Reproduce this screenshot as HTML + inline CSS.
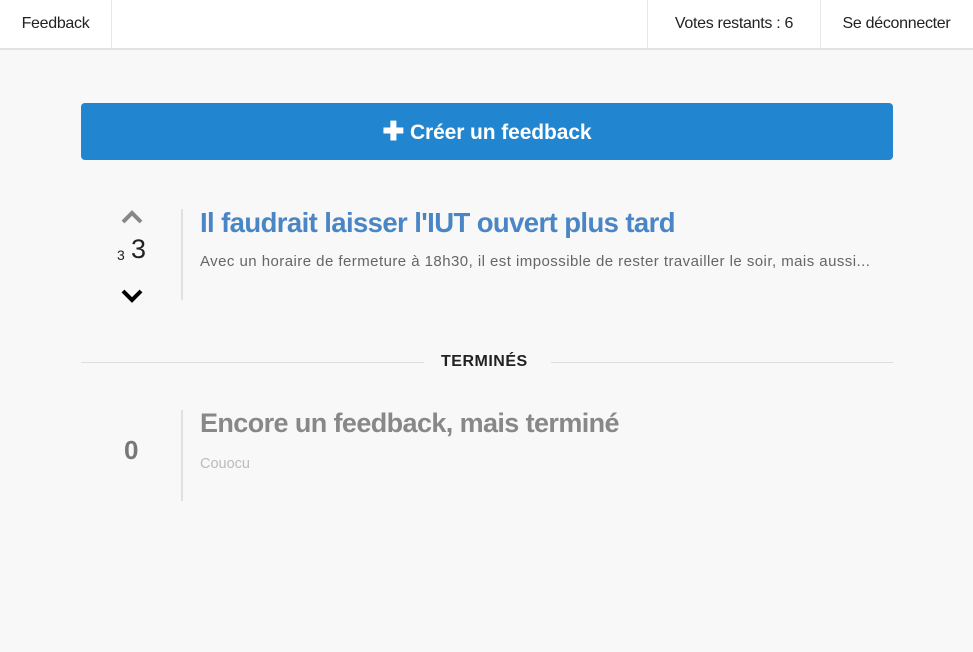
<!DOCTYPE html>
<html><head><meta charset="utf-8"><style>
body{margin:0;width:973px;height:652px;background:#f8f8f8;font-family:"Liberation Sans",sans-serif;overflow:hidden;position:relative}
.nav{position:absolute;left:0;top:0;width:973px;height:48px;background:#fff;border-bottom:2px solid #e2e2e2}
.nav div{position:absolute;top:0;height:48px;line-height:48px;font-size:16px;color:#222;text-align:center;letter-spacing:-0.3px}
.btn{position:absolute;left:81px;top:103px;width:812px;height:57px;background:#2185d0;border-radius:4px;color:#fff;font-weight:bold;font-size:21px;text-align:center;line-height:57px;letter-spacing:-0.1px}
.vl{position:absolute;width:2px;background:#e0e0e0}
.t{position:absolute;white-space:nowrap}
</style></head><body>
<div class="nav">
<div style="left:0;width:111px;border-right:1px solid #e6e6e6">Feedback</div>
<div style="left:647px;width:172px;border-left:1px solid #e6e6e6;border-right:1px solid #e6e6e6">Votes restants : 6</div>
<div style="left:820px;width:153px">Se déconnecter</div>
</div>
<div class="btn"><span style="font-size:26px;vertical-align:-1px">✚</span> Créer un feedback</div>
<svg style="position:absolute;left:120px;top:209px" width="24" height="16"><path d="M3 13 L12 4 L21 13" stroke="#888" stroke-width="4" fill="none"/></svg>
<div class="t" style="left:117px;top:247px;font-size:14px;color:#222">3</div>
<div class="t" style="left:131px;top:234px;font-size:27px;color:#222">3</div>
<svg style="position:absolute;left:120px;top:288px" width="24" height="16"><path d="M3 3 L12 12 L21 3" stroke="#000" stroke-width="4" fill="none"/></svg>
<div class="vl" style="left:181px;top:209px;height:91px"></div>
<div class="t" style="left:200px;top:207px;font-size:27.5px;font-weight:bold;color:#4a86c5;letter-spacing:-0.6px">Il faudrait laisser l'IUT ouvert plus tard</div>
<div class="t" style="left:200px;top:253px;font-size:15px;color:#666;letter-spacing:0.45px">Avec un horaire de fermeture à 18h30, il est impossible de rester travailler le soir, mais aussi...</div>
<div style="position:absolute;left:81px;top:362px;width:343px;height:1px;background:#ddd"></div>
<div style="position:absolute;left:551px;top:362px;width:342px;height:1px;background:#ddd"></div>
<div class="t" style="left:441px;top:353px;font-size:16px;font-weight:bold;color:#222;letter-spacing:0.5px">TERMINÉS</div>
<div class="t" style="left:124px;top:435px;font-size:26px;font-weight:bold;color:#777">0</div>
<div class="vl" style="left:181px;top:410px;height:91px"></div>
<div class="t" style="left:200px;top:408px;font-size:27px;font-weight:bold;color:#888;letter-spacing:-0.6px">Encore un feedback, mais terminé</div>
<div class="t" style="left:200px;top:456px;font-size:14.5px;color:#bbb">Couocu</div>
</body></html>
